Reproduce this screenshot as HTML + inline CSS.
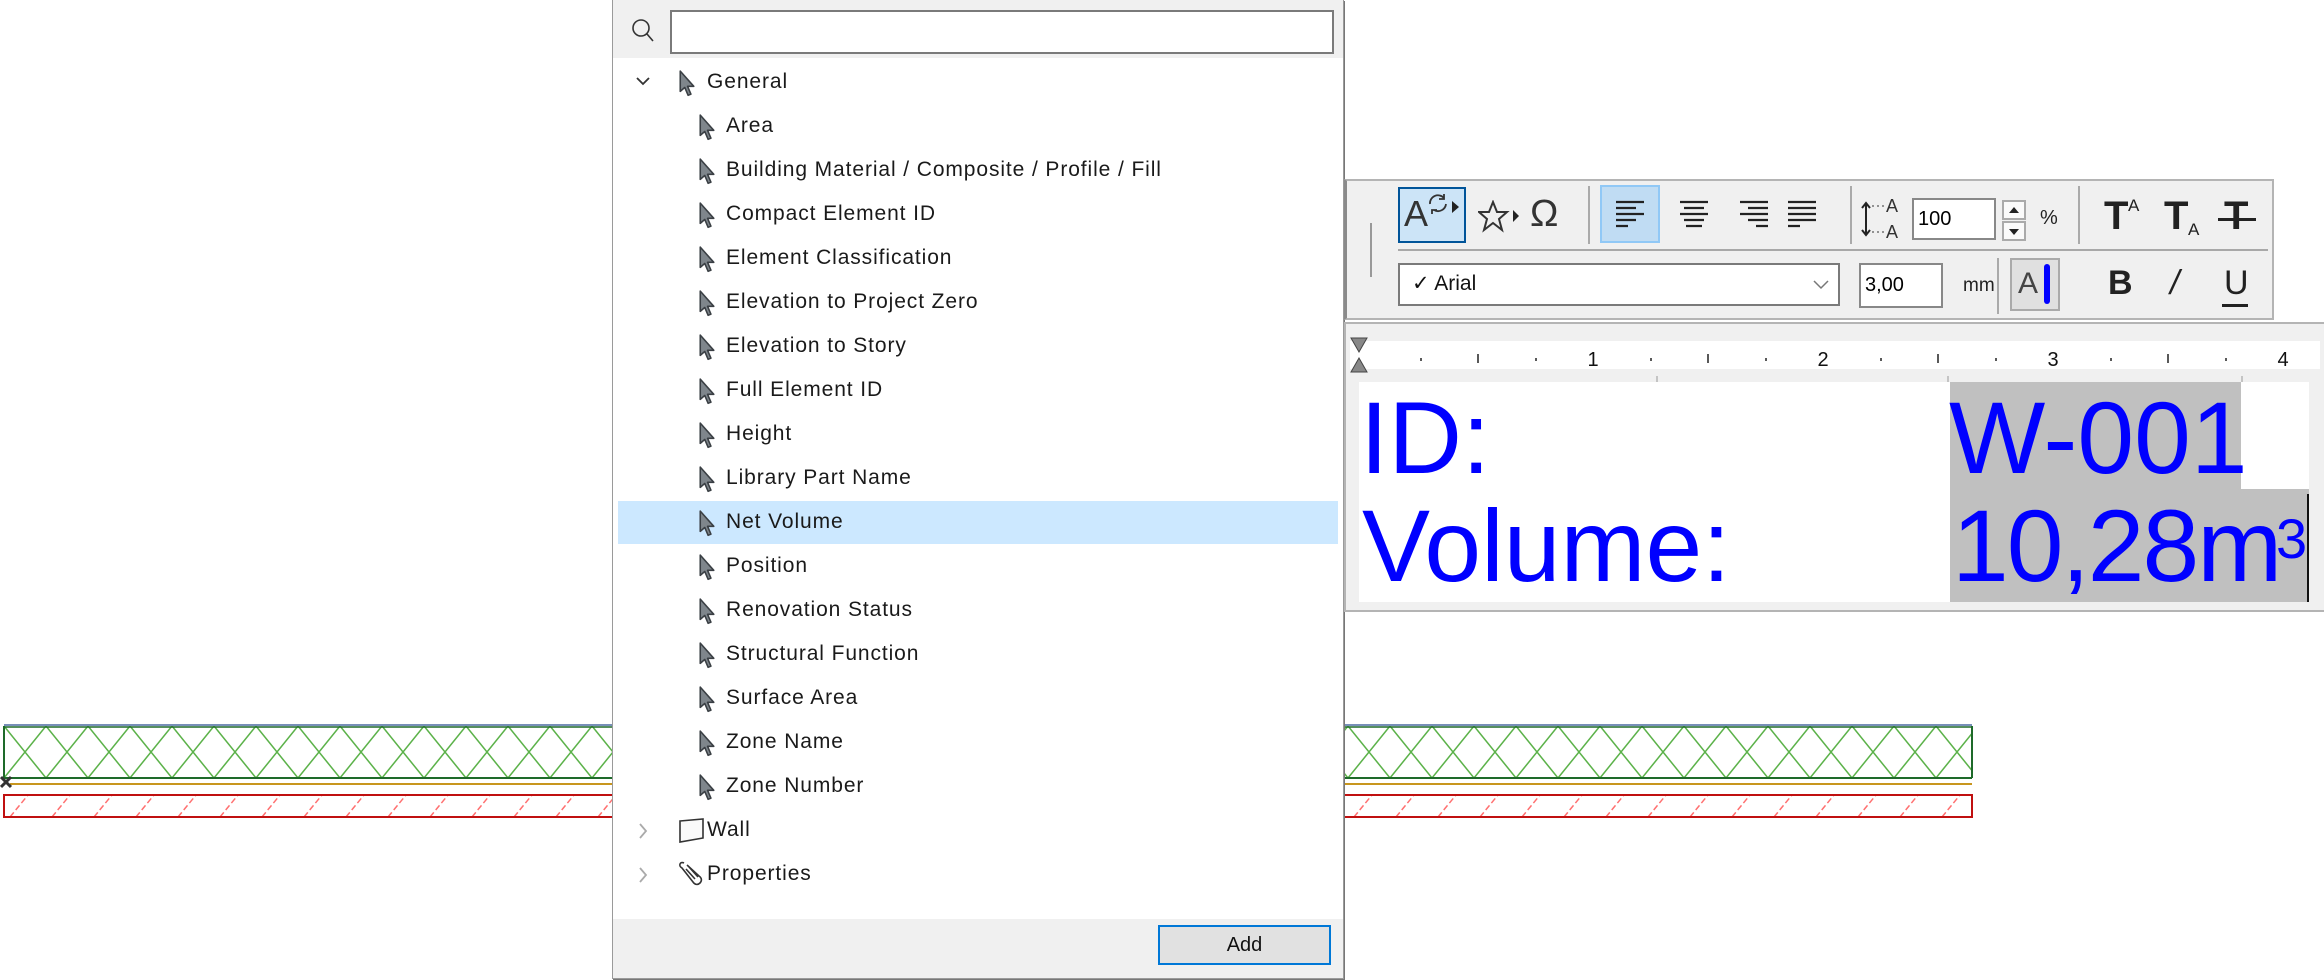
<!DOCTYPE html>
<html><head><meta charset="utf-8"><style>
*{margin:0;padding:0;box-sizing:border-box}
body{width:2324px;height:980px;background:#fff;position:relative;overflow:hidden;font-family:"Liberation Sans",sans-serif}
.a{position:absolute}
.row{position:absolute;left:618px;width:720px;height:44px;font-size:21px;letter-spacing:0.9px;color:#1a1a1a;line-height:44px}
.row span{position:absolute;left:108px}
.row svg{position:absolute;left:80px;top:10px}
.tb{position:absolute;color:#222}
</style></head><body>

<!-- wall drawing -->
<svg class="a" style="left:0;top:715px" width="1980" height="110">
<defs>
<pattern id="g" x="4" y="11" width="42" height="52" patternUnits="userSpaceOnUse">
<path d="M0 0L42 52M42 0L0 52" stroke="#5cb24a" stroke-width="1.5" fill="none"/>
</pattern>
<pattern id="r" x="4" y="80" width="42" height="22" patternUnits="userSpaceOnUse">
<path d="M6 22L24 0" stroke="#ff7070" stroke-width="1.5" stroke-dasharray="6 3" fill="none"/>
</pattern>
</defs>
<rect x="4" y="11" width="1968" height="52" fill="url(#g)"/>
<line x1="4" y1="10" x2="1972" y2="10" stroke="#4a6aa0" stroke-width="1.5"/>
<line x1="4" y1="12" x2="1972" y2="12" stroke="#1e6a2a" stroke-width="1.5"/>
<line x1="4" y1="63" x2="1972" y2="63" stroke="#1e6a2a" stroke-width="2"/>
<line x1="4" y1="11" x2="4" y2="63" stroke="#1e6a2a" stroke-width="2"/>
<line x1="1972" y1="11" x2="1972" y2="63" stroke="#1e6a2a" stroke-width="2"/>
<line x1="10" y1="69" x2="1972" y2="69" stroke="#c8961e" stroke-width="2"/>
<rect x="4" y="80" width="1968" height="22" fill="url(#r)" stroke="#c01010" stroke-width="2"/>
<path d="M1 62l10 10M11 62l-10 10" stroke="#333" stroke-width="3"/>
</svg>

<!-- dialog -->
<div class="a" style="left:612px;top:0;width:732px;height:979px;background:#fff;border:1px solid #9a9a9a;border-top:none;box-shadow:1px 1px 0 #777"></div>
<div class="a" style="left:613px;top:0;width:730px;height:58px;background:#f0f0f0"></div>
<svg class="a" style="left:630px;top:17px" width="26" height="26"><circle cx="11" cy="11" r="8" fill="none" stroke="#333" stroke-width="1.6"/><path d="M17 17l6 7" stroke="#333" stroke-width="1.6"/></svg>
<div class="a" style="left:670px;top:10px;width:664px;height:44px;background:#fff;border:2px solid #7a7a7a"></div>

<div class="a" style="left:618px;top:501px;width:720px;height:43px;background:#cce8ff"></div>

<svg width="0" height="0" style="position:absolute"><defs><symbol id="p" viewBox="0 0 16 24"><path d="M2 1L2 19L6 15.5L9 22.5L11.5 21.5L8.5 14.5L14 14.5Z" fill="#7f868c" stroke="#3a3f44" stroke-width="1.4" stroke-linejoin="round"/></symbol></defs></svg>

<div class="row" style="top:60px"><svg class="a" style="left:18px;top:16px" width="14" height="12"><path d="M1 2l6 6 6-6" stroke="#333" stroke-width="1.8" fill="none"/></svg><svg style="left:60px" width="18" height="27"><use href="#p"/></svg><span style="left:89px">General</span></div>
<div class="row" style="top:104px"><svg width="18" height="27"><use href="#p"/></svg><span>Area</span></div>
<div class="row" style="top:148px"><svg width="18" height="27"><use href="#p"/></svg><span>Building Material / Composite / Profile / Fill</span></div>
<div class="row" style="top:192px"><svg width="18" height="27"><use href="#p"/></svg><span>Compact Element ID</span></div>
<div class="row" style="top:236px"><svg width="18" height="27"><use href="#p"/></svg><span>Element Classification</span></div>
<div class="row" style="top:280px"><svg width="18" height="27"><use href="#p"/></svg><span>Elevation to Project Zero</span></div>
<div class="row" style="top:324px"><svg width="18" height="27"><use href="#p"/></svg><span>Elevation to Story</span></div>
<div class="row" style="top:368px"><svg width="18" height="27"><use href="#p"/></svg><span>Full Element ID</span></div>
<div class="row" style="top:412px"><svg width="18" height="27"><use href="#p"/></svg><span>Height</span></div>
<div class="row" style="top:456px"><svg width="18" height="27"><use href="#p"/></svg><span>Library Part Name</span></div>
<div class="row" style="top:500px"><svg width="18" height="27"><use href="#p"/></svg><span>Net Volume</span></div>
<div class="row" style="top:544px"><svg width="18" height="27"><use href="#p"/></svg><span>Position</span></div>
<div class="row" style="top:588px"><svg width="18" height="27"><use href="#p"/></svg><span>Renovation Status</span></div>
<div class="row" style="top:632px"><svg width="18" height="27"><use href="#p"/></svg><span>Structural Function</span></div>
<div class="row" style="top:676px"><svg width="18" height="27"><use href="#p"/></svg><span>Surface Area</span></div>
<div class="row" style="top:720px"><svg width="18" height="27"><use href="#p"/></svg><span>Zone Name</span></div>
<div class="row" style="top:764px"><svg width="18" height="27"><use href="#p"/></svg><span>Zone Number</span></div>
<div class="row" style="top:808px"><svg class="a" style="left:20px;top:15px" width="10" height="16"><path d="M2 1l6 7-6 7" stroke="#aaa" stroke-width="1.8" fill="none"/></svg><svg class="a" style="left:60px;top:10px" width="28" height="26"><path d="M2 3L25 1L25 20L2 24Z" fill="#fafafa" stroke="#333" stroke-width="1.6"/></svg><span style="left:89px">Wall</span></div>
<div class="row" style="top:852px"><svg class="a" style="left:20px;top:15px" width="10" height="16"><path d="M2 1l6 7-6 7" stroke="#aaa" stroke-width="1.8" fill="none"/></svg><svg class="a" style="left:60px;top:8px" width="26" height="28"><path d="M6 3C2 1 0 6 4 8L15 22C17 25 20 25 22 23C24 21 24 18 21 16L9 5M8 9L17 19M11 7L20 17" fill="none" stroke="#333" stroke-width="1.6"/></svg><span style="left:89px">Properties</span></div>

<div class="a" style="left:613px;top:919px;width:730px;height:59px;background:#f0f0f0"></div>
<div class="a" style="left:1158px;top:925px;width:173px;height:40px;background:#e1e1e1;border:2px solid #0078d7;font-size:20px;line-height:36px;text-align:center;color:#111">Add</div>

<!-- toolbar -->
<div class="a" style="left:1344px;top:179px;width:930px;height:141px;background:#f0f0f0;border:2px solid #b4b4b4;border-left:3px solid #8a8a8a"></div>
<div class="a" style="left:1370px;top:223px;width:2px;height:54px;background:#999"></div>
<div class="a" style="left:1398px;top:187px;width:68px;height:56px;background:#cce4f7;border:2px solid #005499"></div>
<div class="tb" style="left:1404px;top:193px;font-size:36px;font-weight:300;color:#333">A</div>
<svg class="a" style="left:1426px;top:192px" width="36" height="30"><path d="M4 12a8 8 0 0 1 14-6M18 2v5h-5M20 12a8 8 0 0 1-12 6M6 22v-4h5" fill="none" stroke="#333" stroke-width="1.8"/><path d="M26 9l7 6-7 6z" fill="#222"/></svg>
<svg class="a" style="left:1478px;top:200px" width="44" height="36"><path d="M15 2l4 10h10l-8 7 3 11-9-7-9 7 3-11-8-7h10z" fill="none" stroke="#333" stroke-width="2"/><path d="M35 10l6 6-6 6z" fill="#222"/></svg>
<div class="tb" style="left:1530px;top:193px;font-size:38px;color:#333">Ω</div>
<div class="a" style="left:1588px;top:186px;width:2px;height:58px;background:#aaa"></div>
<div class="a" style="left:1600px;top:185px;width:60px;height:58px;background:#c0dcf3;border:2px solid #90c8f6"></div>
<svg class="a" style="left:1616px;top:200px" width="200" height="28">
<g stroke="#222" stroke-width="2.2"><path d="M0 2h28M0 8h20M0 14h28M0 20h20M0 26h12"/>
<path d="M64 2h28M68 8h20M64 14h28M68 20h20M70 26h16"/>
<path d="M124 2h28M132 8h20M124 14h28M132 20h20M140 26h12"/>
<path d="M184 2h28M184 8h28M184 14h28M184 20h28M184 26h12" transform="translate(-12 0)"/></g></svg>
<div class="a" style="left:1850px;top:186px;width:2px;height:58px;background:#aaa"></div>
<svg class="a" style="left:1860px;top:196px" width="48" height="44"><path d="M6 8v30M2 12l4-5 4 5M2 34l4 5 4-5" fill="none" stroke="#222" stroke-width="2"/><text x="26" y="16" font-size="18" fill="#333" font-family="Liberation Sans">A</text><text x="26" y="42" font-size="18" fill="#333" font-family="Liberation Sans">A</text><path d="M12 10h12M12 36h12" stroke="#333" stroke-dasharray="2 3"/></svg>
<div class="a" style="left:1912px;top:198px;width:84px;height:42px;background:#fff;border:2px solid #888;font-size:20px;line-height:38px;padding-left:4px">100</div>
<div class="a" style="left:2002px;top:200px;width:24px;height:20px;border:2px solid #aaa;background:#fafafa"></div>
<div class="a" style="left:2002px;top:221px;width:24px;height:20px;border:2px solid #aaa;background:#fafafa"></div>
<svg class="a" style="left:2008px;top:206px" width="12" height="30"><path d="M1 7l5-6 5 6zM1 23l5 6 5-6z" fill="#222"/></svg>
<div class="tb" style="left:2040px;top:207px;font-size:20px">%</div>
<div class="a" style="left:2078px;top:186px;width:2px;height:58px;background:#aaa"></div>
<div class="tb" style="left:2104px;top:194px;font-size:40px;font-weight:bold">T</div><div class="tb" style="left:2128px;top:196px;font-size:17px">A</div>
<div class="tb" style="left:2164px;top:194px;font-size:40px;font-weight:bold">T</div><div class="tb" style="left:2188px;top:220px;font-size:17px">A</div>
<div class="tb" style="left:2224px;top:194px;font-size:40px;font-weight:bold">T</div><div class="a" style="left:2218px;top:218px;width:38px;height:3px;background:#222"></div>
<div class="a" style="left:1398px;top:249px;width:870px;height:2px;background:#a8a8a8"></div>
<div class="a" style="left:1398px;top:263px;width:442px;height:43px;background:#fff;border:2px solid #7a7a7a;font-size:21px;line-height:38px;padding-left:12px;color:#111">✓ Arial</div>
<svg class="a" style="left:1813px;top:280px" width="16" height="10"><path d="M1 1l7 7 7-7" fill="none" stroke="#777" stroke-width="1.5"/></svg>
<div class="a" style="left:1859px;top:263px;width:84px;height:45px;background:#fff;border:2px solid #888;font-size:20px;line-height:40px;padding-left:4px">3,00</div>
<div class="tb" style="left:1963px;top:275px;font-size:19px">mm</div>
<div class="a" style="left:1997px;top:258px;width:2px;height:56px;background:#aaa"></div>
<div class="a" style="left:2010px;top:258px;width:50px;height:53px;background:#e0e0e0;border:2px solid #aaa"></div>
<div class="tb" style="left:2018px;top:267px;font-size:30px;color:#444">A</div>
<div class="a" style="left:2044px;top:264px;width:6px;height:40px;background:#0000ff;border-radius:3px"></div>
<div class="tb" style="left:2108px;top:264px;font-size:34px;font-weight:bold">B</div>
<div class="tb" style="left:2170px;top:264px;font-size:34px;font-style:italic">/</div>
<div class="tb" style="left:2224px;top:264px;font-size:34px">U</div>
<div class="a" style="left:2222px;top:304px;width:26px;height:3px;background:#222"></div>

<!-- text pane -->
<div class="a" style="left:1344px;top:322px;width:980px;height:290px;background:#f0f0f0;border:2px solid #b4b4b4;border-right:none"></div>
<div class="a" style="left:1350px;top:341px;width:970px;height:28px;background:#fff"></div>
<svg class="a" style="left:1350px;top:336px" width="970" height="50">
<path d="M1 2h16l-8 14zM1 36h16l-8-14z" fill="#888" stroke="#444"/>
<g stroke="#222" stroke-width="1.5"><path d="M71 22v3M128 18v9M186 22v3M301 22v3M358 18v9M416 22v3M531 22v3M588 18v9M646 22v3M761 22v3M818 18v9M876 22v3"/></g>
<g stroke="#999"><path d="M307 40v6M598 40v6M892 40v6"/></g>
<g font-family="Liberation Sans" font-size="20" fill="#111" text-anchor="middle"><text x="243" y="30">1</text><text x="473" y="30">2</text><text x="703" y="30">3</text><text x="933" y="30">4</text></g>
</svg>
<div class="a" style="left:1359px;top:382px;width:950px;height:220px;background:#fff"></div>
<div class="a" style="left:1950px;top:382px;width:291px;height:108px;background:#c0c0c0"></div>
<div class="a" style="left:1950px;top:489px;width:359px;height:113px;background:#c0c0c0"></div>
<div class="a" style="left:2307px;top:494px;width:2px;height:108px;background:#111"></div>
<div class="a" style="left:1360px;top:378px;font-size:102px;line-height:120px;color:#0000ff">ID:</div>
<div class="a" style="left:1949px;top:378px;font-size:102px;line-height:120px;color:#0000ff">W-001</div>
<div class="a" style="left:1362px;top:486px;font-size:102px;line-height:120px;color:#0000ff">Volume:</div>
<div class="a" style="left:1952px;top:486px;font-size:102px;line-height:120px;color:#0000ff;letter-spacing:-2px">10,28m</div>
<div class="a" style="left:2276px;top:506px;font-size:56px;line-height:66px;color:#0000ff">3</div>
</body></html>
